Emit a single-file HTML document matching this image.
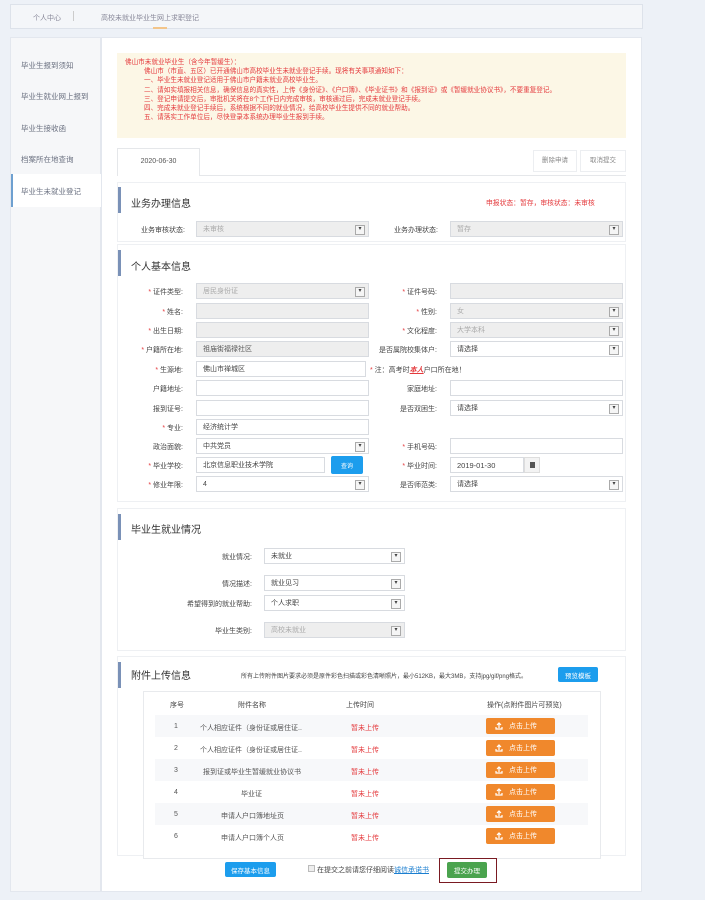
<!DOCTYPE html>
<html><head><meta charset="utf-8"><style>
*{box-sizing:border-box;margin:0;padding:0}
body{width:705px;height:900px;background:#edf1f7;font-family:"Liberation Sans","Noto Sans CJK SC",sans-serif;font-size:7px;color:#555;position:relative;overflow:hidden}
.a{position:absolute}
.top{left:10px;top:4px;width:633px;height:25px;background:#f4f6f9;border:1px solid #dde2ea}
.side{left:10px;top:37px;width:91px;height:855px;background:#f6f7f9;border:1px solid #e3e7ee}
.side div{position:absolute;left:10px;font-size:7.5px;color:#6a7080}
.main{left:101px;top:37px;width:541px;height:855px;background:#fff;border:1px solid #e3e7ee}
.note{left:117px;top:53px;width:509px;height:85px;background:#fcf7e6;color:#e4393c;font-size:6.6px;line-height:9.2px;padding:5px 8px}
.card{border:1px solid #eef0f3;background:#fff}
.bar{width:3px;height:26px;background:#7a91b7}
.tt{font-size:10px;color:#333}
.lb{text-align:right;font-size:7px;color:#444;width:100px}
.lb i{color:#e4393c;font-style:normal}
.in{height:16px;border:1px solid #d8dbe0;background:#fff;font-size:7px;padding:0 6px;color:#444;display:flex;align-items:center}
.dis{background:#eeeeee;color:#aaa}
.sel::after{content:"▾";position:absolute;right:3px;top:3px;width:8px;height:8px;border:1px solid #aaa;font-size:6px;line-height:7px;text-align:center;color:#444;background:#f5f5f5}
.btn{color:#fff;font-size:7px;border-radius:2px;display:flex;align-items:center;justify-content:center}
.row{left:155px;width:433px;height:22px}
.row span{position:absolute;top:8px;font-size:7px}
.up{position:absolute;left:331px;top:3px;width:69px;height:16px;background:#f0882c;border-radius:2px;color:#fff;font-size:7px;display:flex;align-items:center;padding-left:9px;gap:6px}
</style></head><body>
<div class="a top"><span class="a" style="left:22px;top:8px;color:#889">个人中心</span><span class="a" style="left:62px;top:6px;width:1px;height:10px;background:#ccc"></span><span class="a" style="left:90px;top:8px;color:#889">高校未就业毕业生网上求职登记</span><span class="a" style="left:142px;top:22px;width:14px;height:2px;background:#f3c58a"></span></div>
<div class="a side">
<div style="top:22px">毕业生报到须知</div>
<div style="top:53px">毕业生就业网上报到</div>
<div style="top:85px">毕业生接收函</div>
<div style="top:116px">档案所在地查询</div>
<div style="left:0;top:136px;width:90px;height:33px;background:#fff;border-left:2px solid #6ea0d0"></div>
<div style="top:148px">毕业生未就业登记</div>
</div>
<div class="a main"></div>
<div class="a note">佛山市未就业毕业生（含今年暂缓生）：<br>
<span style="padding-left:19px">佛山市（市直、五区）已开通佛山市高校毕业生未就业登记手续。现将有关事项通知如下：</span><br>
<span style="padding-left:19px">一、毕业生未就业登记适用于佛山市户籍未就业高校毕业生。</span><br>
<span style="padding-left:19px">二、请如实填报相关信息，确保信息的真实性，上传《身份证》、《户口簿》、《毕业证书》和《报到证》或《暂缓就业协议书》，不要重复登记。</span><br>
<span style="padding-left:19px">三、登记申请提交后，审批机关将在8个工作日内完成审核，审核通过后，完成未就业登记手续。</span><br>
<span style="padding-left:19px">四、完成未就业登记手续后，系统根据不同的就业情况，给高校毕业生提供不同的就业帮助。</span><br>
<span style="padding-left:19px">五、请落实工作单位后，尽快登录本系统办理毕业生报到手续。</span></div>
<div class="a" style="left:117px;top:175px;width:509px;height:1px;background:#e5e7ea"></div>
<div class="a" style="left:117px;top:148px;width:83px;height:28px;background:#fff;border:1px solid #e5e7ea;border-bottom:none;text-align:center;line-height:26px;color:#555">2020-06-30</div>
<div class="a" style="left:533px;top:150px;width:44px;height:22px;border:1px solid #eceef1;text-align:center;line-height:20px;color:#888;font-size:6.5px">删除申请</div>
<div class="a" style="left:580px;top:150px;width:46px;height:22px;border:1px solid #eceef1;text-align:center;line-height:20px;color:#888;font-size:6.5px">取消提交</div>

<div class="a card" style="left:117px;top:182px;width:509px;height:60px"></div>
<div class="a bar" style="left:118px;top:187px"></div>
<div class="a tt" style="left:131px;top:195px">业务办理信息</div>
<div class="a" style="left:486px;top:197px;color:#e4393c;font-size:6.8px">申报状态：暂存，审核状态：未审核</div>
<div class="a lb" style="left:85px;top:225px">业务审核状态:</div>
<div class="a in dis sel" style="left:196px;top:221px;width:173px">未审核</div>
<div class="a lb" style="left:338px;top:225px">业务办理状态:</div>
<div class="a in dis sel" style="left:450px;top:221px;width:173px">暂存</div>

<div class="a card" style="left:117px;top:244px;width:509px;height:258px"></div>
<div class="a bar" style="left:118px;top:250px"></div>
<div class="a tt" style="left:131px;top:258px">个人基本信息</div>

<div class="a lb" style="left:83px;top:287px"><i>* </i>证件类型:</div><div class="a in dis sel" style="left:196px;top:283px;width:173px">居民身份证</div>
<div class="a lb" style="left:337px;top:287px"><i>* </i>证件号码:</div><div class="a in dis" style="left:450px;top:283px;width:173px"></div>
<div class="a lb" style="left:83px;top:307px"><i>* </i>姓名:</div><div class="a in dis" style="left:196px;top:303px;width:173px"></div>
<div class="a lb" style="left:337px;top:307px"><i>* </i>性别:</div><div class="a in dis sel" style="left:450px;top:303px;width:173px">女</div>
<div class="a lb" style="left:83px;top:326px"><i>* </i>出生日期:</div><div class="a in dis" style="left:196px;top:322px;width:173px"></div>
<div class="a lb" style="left:337px;top:326px"><i>* </i>文化程度:</div><div class="a in dis sel" style="left:450px;top:322px;width:173px">大学本科</div>
<div class="a lb" style="left:83px;top:345px"><i>* </i>户籍所在地:</div><div class="a in dis" style="left:196px;top:341px;width:173px;color:#555">祖庙街福禄社区</div>
<div class="a lb" style="left:337px;top:345px">是否属院校集体户:</div><div class="a in sel" style="left:450px;top:341px;width:173px">请选择</div>
<div class="a lb" style="left:83px;top:365px"><i>* </i>生源地:</div><div class="a in" style="left:196px;top:361px;width:170px">佛山市禅城区</div>
<div class="a" style="left:370px;top:365px;color:#444"><span style="color:#e4393c">* </span>注：高考时<b style="color:#e4393c;font-style:italic;text-decoration:underline">本人</b>户口所在地！</div>
<div class="a lb" style="left:83px;top:384px">户籍地址:</div><div class="a in" style="left:196px;top:380px;width:173px"></div>
<div class="a lb" style="left:337px;top:384px">家庭地址:</div><div class="a in" style="left:450px;top:380px;width:173px"></div>
<div class="a lb" style="left:83px;top:404px">报到证号:</div><div class="a in" style="left:196px;top:400px;width:173px"></div>
<div class="a lb" style="left:337px;top:404px">是否双困生:</div><div class="a in sel" style="left:450px;top:400px;width:173px">请选择</div>
<div class="a lb" style="left:83px;top:423px"><i>* </i>专业:</div><div class="a in" style="left:196px;top:419px;width:173px">经济统计学</div>
<div class="a lb" style="left:83px;top:442px">政治面貌:</div><div class="a in sel" style="left:196px;top:438px;width:173px">中共党员</div>
<div class="a lb" style="left:337px;top:442px"><i>* </i>手机号码:</div><div class="a in" style="left:450px;top:438px;width:173px"></div>
<div class="a lb" style="left:83px;top:461px"><i>* </i>毕业学校:</div><div class="a in" style="left:196px;top:457px;width:129px">北京信息职业技术学院</div>
<div class="a btn" style="left:331px;top:456px;width:32px;height:18px;background:#1c9ded;font-size:6px">查询</div>
<div class="a lb" style="left:337px;top:461px"><i>* </i>毕业时间:</div><div class="a in" style="left:450px;top:457px;width:74px;font-size:7.5px">2019-01-30</div>
<div class="a" style="left:524px;top:457px;width:16px;height:16px;border:1px solid #ddd;background:#f3f3f3"><span class="a" style="left:5px;top:4px;width:5px;height:6px;background:#555"></span></div>
<div class="a lb" style="left:83px;top:480px"><i>* </i>修业年限:</div><div class="a in sel" style="left:196px;top:476px;width:173px">4</div>
<div class="a lb" style="left:337px;top:480px">是否师范类:</div><div class="a in sel" style="left:450px;top:476px;width:173px">请选择</div>

<div class="a card" style="left:117px;top:508px;width:509px;height:143px"></div>
<div class="a bar" style="left:118px;top:514px"></div>
<div class="a tt" style="left:131px;top:521px">毕业生就业情况</div>
<div class="a lb" style="left:152px;top:552px">就业情况:</div><div class="a in sel" style="left:264px;top:548px;width:141px">未就业</div>
<div class="a lb" style="left:152px;top:579px">情况描述:</div><div class="a in sel" style="left:264px;top:575px;width:141px">就业见习</div>
<div class="a lb" style="left:102px;top:599px;width:150px">希望得到的就业帮助:</div><div class="a in sel" style="left:264px;top:595px;width:141px">个人求职</div>
<div class="a lb" style="left:152px;top:626px">毕业生类别:</div><div class="a in dis sel" style="left:264px;top:622px;width:141px">高校未就业</div>

<div class="a card" style="left:117px;top:656px;width:509px;height:200px"></div>
<div class="a bar" style="left:118px;top:662px"></div>
<div class="a tt" style="left:131px;top:667px">附件上传信息</div>
<div class="a" style="left:241px;top:671px;font-size:6px;color:#444">所有上传附件图片要求必须是原件彩色扫描或彩色清晰照片，最小512KB，最大3MB，支持jpg/gif/png格式。</div>
<div class="a btn" style="left:558px;top:667px;width:40px;height:15px;background:#1c9ded;font-size:6.5px">预览模板</div>
<div class="a card" style="left:143px;top:691px;width:458px;height:168px;border-color:#e8eaed"></div>
<div class="a" style="left:170px;top:700px;color:#444">序号</div>
<div class="a" style="left:238px;top:700px;color:#444">附件名称</div>
<div class="a" style="left:346px;top:700px;color:#444">上传时间</div>
<div class="a" style="left:487px;top:700px;color:#444">操作(点附件图片可预览)</div>

<div class="a row" style="top:715px;background:#f7f8fa"><span style="left:19px">1</span><span style="left:45px">个人相应证件（身份证或居住证..</span><span style="left:196px;color:#e4393c">暂未上传</span><div class="up"><svg width="8" height="8" viewBox="0 0 8 8" fill="none" stroke="#fff" stroke-width="1.2"><path d="M4 6V1M2 3l2-2 2 2M1 5v2h6V5"/></svg>点击上传</div></div>
<div class="a row" style="top:737px"><span style="left:19px">2</span><span style="left:45px">个人相应证件（身份证或居住证..</span><span style="left:196px;color:#e4393c">暂未上传</span><div class="up"><svg width="8" height="8" viewBox="0 0 8 8" fill="none" stroke="#fff" stroke-width="1.2"><path d="M4 6V1M2 3l2-2 2 2M1 5v2h6V5"/></svg>点击上传</div></div>
<div class="a row" style="top:759px;background:#f7f8fa"><span style="left:19px">3</span><span style="left:48px">报到证或毕业生暂缓就业协议书</span><span style="left:196px;color:#e4393c">暂未上传</span><div class="up"><svg width="8" height="8" viewBox="0 0 8 8" fill="none" stroke="#fff" stroke-width="1.2"><path d="M4 6V1M2 3l2-2 2 2M1 5v2h6V5"/></svg>点击上传</div></div>
<div class="a row" style="top:781px"><span style="left:19px">4</span><span style="left:86px">毕业证</span><span style="left:196px;color:#e4393c">暂未上传</span><div class="up"><svg width="8" height="8" viewBox="0 0 8 8" fill="none" stroke="#fff" stroke-width="1.2"><path d="M4 6V1M2 3l2-2 2 2M1 5v2h6V5"/></svg>点击上传</div></div>
<div class="a row" style="top:803px;background:#f7f8fa"><span style="left:19px">5</span><span style="left:66px">申请人户口簿地址页</span><span style="left:196px;color:#e4393c">暂未上传</span><div class="up"><svg width="8" height="8" viewBox="0 0 8 8" fill="none" stroke="#fff" stroke-width="1.2"><path d="M4 6V1M2 3l2-2 2 2M1 5v2h6V5"/></svg>点击上传</div></div>
<div class="a row" style="top:825px"><span style="left:19px">6</span><span style="left:66px">申请人户口簿个人页</span><span style="left:196px;color:#e4393c">暂未上传</span><div class="up"><svg width="8" height="8" viewBox="0 0 8 8" fill="none" stroke="#fff" stroke-width="1.2"><path d="M4 6V1M2 3l2-2 2 2M1 5v2h6V5"/></svg>点击上传</div></div>

<div class="a btn" style="left:225px;top:862px;width:51px;height:15px;background:#1c9ded;font-size:6.5px">保存基本信息</div>
<div class="a" style="left:308px;top:865px;width:7px;height:7px;border:1px solid #bbb;background:#eee"></div>
<div class="a" style="left:317px;top:865px;color:#444">在提交之前请您仔细阅读<span style="color:#1c7fd0;text-decoration:underline">诚信承诺书</span></div>
<div class="a" style="left:439px;top:858px;width:58px;height:25px;border:1px solid #7a1a22"></div>
<div class="a btn" style="left:447px;top:862px;width:40px;height:16px;background:#4aa34e;font-size:6.5px">提交办理</div>
</body></html>
